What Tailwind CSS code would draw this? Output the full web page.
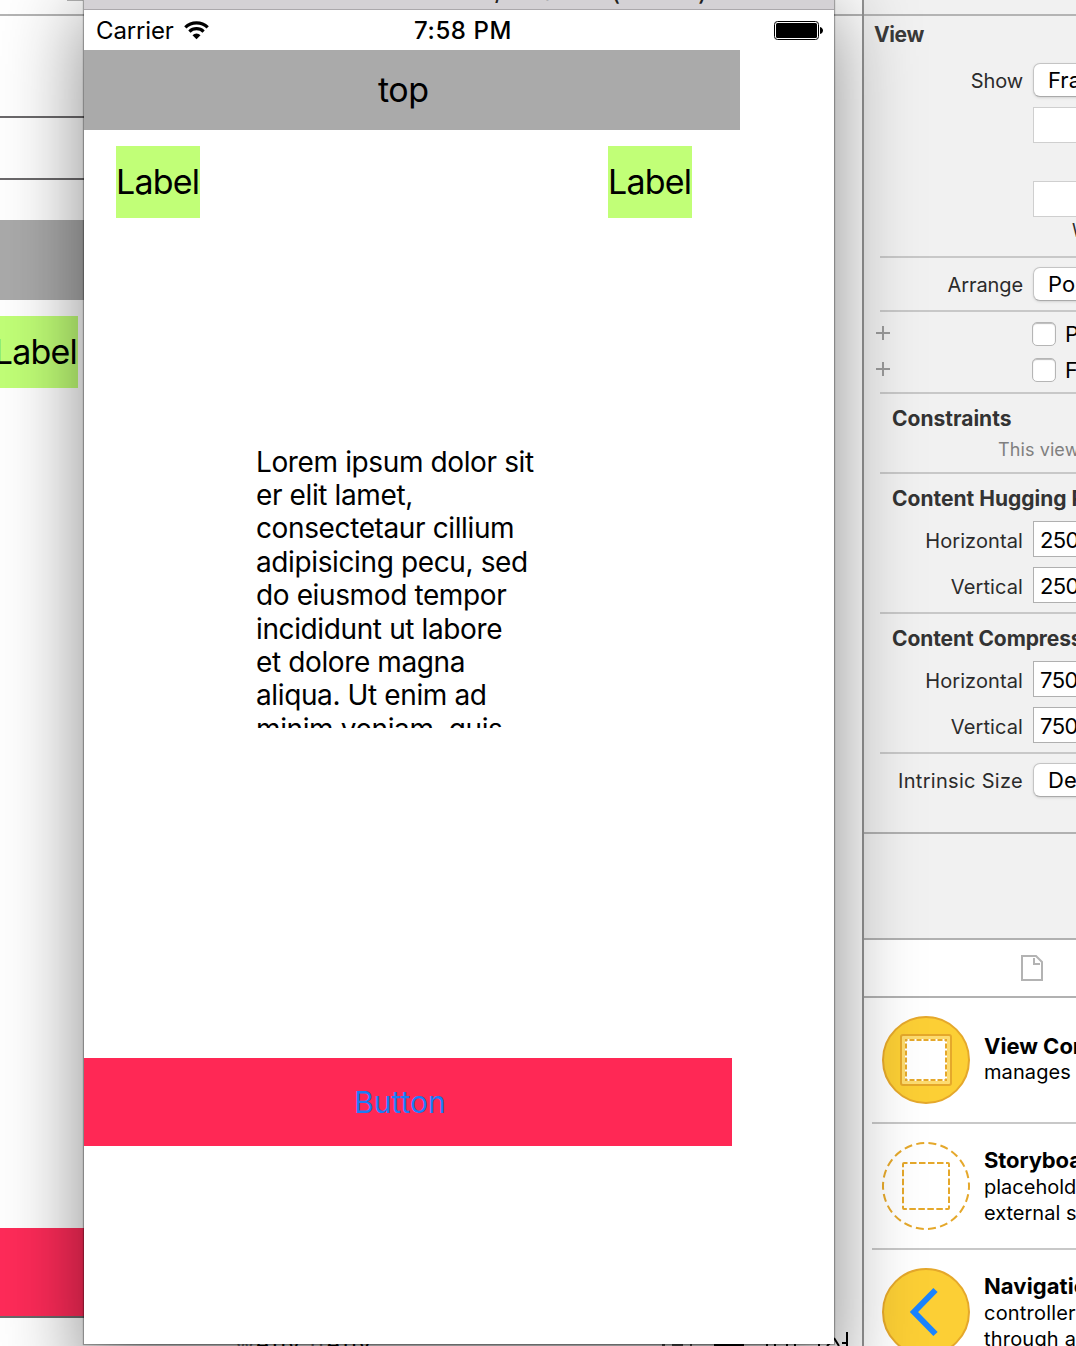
<!DOCTYPE html>
<html lang="en">
<head>
<meta charset="utf-8">
<title>Simulator and size inspector</title>
<script src="https://cdn.jsdelivr.net/npm/@tailwindcss/browser@4"></script>
</head>
<body class="bg-white">
<div class="relative flex h-[1346px] w-[1076px] overflow-hidden bg-white font-['Inter',sans-serif] text-black">

  <!-- Storyboard canvas -->
  <main class="flex h-full w-[862px] shrink-0 flex-col">
    <div class="flex h-4 shrink-0 border-b-2 border-[#b4b4b4] pl-[67px]"><div class="h-px w-4 bg-[#b4b4b4]"></div></div>
    <div class="w-[800px]">
      <div class="h-[102px] border-b-2 border-[#6b696b]"></div>
      <div class="h-[62px] border-b-2 border-[#6b696b]"></div>
      <div class="mt-10 h-20 bg-[#aaaaaa]"></div>
      <div class="mt-4 flex h-[72px] w-[78px] items-center justify-end overflow-hidden bg-[#c1ff77] pr-px pb-px text-[34px] tracking-[-0.8px]">Label</div>
      <div class="mt-[840px] h-[90px] border-b-2 border-[#6b696b] bg-[#ff2b59]"></div>
    </div>
    <div class="flex justify-between pr-3 pl-[235px]">
      <div class="mt-3 h-4 text-[24px] leading-[28px] tracking-[1.2px]"><span class="text-[#777]">w</span>Any <span class="text-[#777]">h</span>Any</div>
      <svg class="mt-3 h-4 w-[190px]" viewBox="660 1330 190 16" fill="none" stroke="#000" stroke-width="2">
        <path d="M662 1345h3M672 1345h11M690 1345h2" stroke="#555"/>
        <path d="M714 1345h30M767 1343v3M775 1343v3M787 1343v3M795 1343v3M819 1343v3M827 1346l3-3M834 1338l5 8M842 1343h5M847 1332v14"/>
      </svg>
    </div>
  </main>

  <!-- Inspector -->
  <aside class="flex h-full w-[214px] shrink-0 flex-col overflow-hidden border-l-2 border-[#949494] bg-[#f1f1f1] text-[20px] whitespace-nowrap text-[#2b2b2b]">
    <div class="h-4 shrink-0 border-b-2 border-[#b4b4b4]"></div>
    <h2 class="mt-[5px] pl-[10px] text-[21px] leading-7 font-bold tracking-[-0.4px] text-[#3a3a3a]">View</h2>
    <div class="mt-[14px] flex h-[34px] shrink-0 items-center">
      <span class="w-[159px] shrink-0 pt-0.5 text-right tracking-[-0.1px]">Show</span>
      <span class="ml-[10px] flex h-[34px] w-20 shrink-0 items-center rounded-[7px] border border-[#c4c4c4] border-b-[#aaa] bg-white pl-[14px] text-[22px] text-black shadow-sm">Frame</span>
    </div>
    <div class="mt-[10px] ml-[169px] h-9 w-20 shrink-0 border border-[#cfcfcf] bg-white"></div>
    <div class="mt-[38px] ml-[169px] h-9 w-20 shrink-0 border border-[#cfcfcf] bg-white"></div>
    <div class="ml-[208px] h-[27px] shrink-0 text-[18px] leading-[28px]">Width</div>
    <div class="mt-3 ml-4 h-0.5 shrink-0 bg-[#c8c8c8]"></div>
    <div class="mt-[9px] flex h-[34px] shrink-0 items-center">
      <span class="w-[159px] shrink-0 pt-0.5 text-right tracking-[-0.1px]">Arrange</span>
      <span class="ml-[10px] flex h-[34px] w-20 shrink-0 items-center rounded-[7px] border border-[#c4c4c4] border-b-[#aaa] bg-white pl-[14px] text-[22px] text-black shadow-sm">Position</span>
    </div>
    <div class="mt-[9px] ml-4 h-0.5 shrink-0 bg-[#c8c8c8]"></div>
    <div class="mt-1 flex h-9 shrink-0 items-center pl-3">
      <svg class="mb-0.5 h-[14px] w-[14px] shrink-0" viewBox="0 0 14 14" stroke="#9b9b9b" stroke-width="2"><path d="M7 0v14M0 7h14"/></svg>
      <span class="ml-[142px] size-6 shrink-0 rounded-[5px] border border-[#b5b5b5] bg-white shadow-[inset_0_1px_1px_#bbb]"></span>
      <span class="ml-[9px] text-[22px] text-black">Preserve</span>
    </div>
    <div class="flex h-9 shrink-0 items-center pl-3">
      <svg class="mb-0.5 h-[14px] w-[14px] shrink-0" viewBox="0 0 14 14" stroke="#9b9b9b" stroke-width="2"><path d="M7 0v14M0 7h14"/></svg>
      <span class="ml-[142px] size-6 shrink-0 rounded-[5px] border border-[#b5b5b5] bg-white shadow-[inset_0_1px_1px_#bbb]"></span>
      <span class="ml-[9px] text-[22px] text-black">Follow</span>
    </div>
    <div class="mt-1 ml-4 h-0.5 shrink-0 bg-[#c8c8c8]"></div>
    <h3 class="mt-[11px] pl-7 text-[21px] leading-7 font-bold text-[#333]">Constraints</h3>
    <p class="mt-[3px] pl-[134px] text-[18px] leading-7 tracking-[0.1px] text-[#808080]">This view</p>
    <div class="mt-[8px] ml-4 h-0.5 shrink-0 bg-[#c8c8c8]"></div>
    <h3 class="mt-[11px] pl-7 text-[21px] leading-7 font-bold text-[#333]">Content Hugging Priority</h3>
    <div class="mt-[8px] flex h-9 shrink-0 items-center">
      <span class="w-[159px] shrink-0 pt-1 text-right tracking-[0.1px]">Horizontal</span>
      <span class="ml-[10px] flex h-9 w-20 shrink-0 items-center border border-[#b0b0b0] bg-white pt-0.5 pl-[6px] text-[22px] tracking-[-0.6px] text-black">250</span>
    </div>
    <div class="mt-[10px] flex h-9 shrink-0 items-center">
      <span class="w-[159px] shrink-0 pt-1 text-right tracking-[0.1px]">Vertical</span>
      <span class="ml-[10px] flex h-9 w-20 shrink-0 items-center border border-[#b0b0b0] bg-white pt-0.5 pl-[6px] text-[22px] tracking-[-0.6px] text-black">250</span>
    </div>
    <div class="mt-[9px] ml-4 h-0.5 shrink-0 bg-[#c8c8c8]"></div>
    <h3 class="mt-[11px] pl-7 text-[21px] leading-7 font-bold tracking-[-0.1px] text-[#333]">Content Compression</h3>
    <div class="mt-[8px] flex h-9 shrink-0 items-center">
      <span class="w-[159px] shrink-0 pt-1 text-right tracking-[0.1px]">Horizontal</span>
      <span class="ml-[10px] flex h-9 w-20 shrink-0 items-center border border-[#b0b0b0] bg-white pt-0.5 pl-[6px] text-[22px] tracking-[-0.6px] text-black">750</span>
    </div>
    <div class="mt-[10px] flex h-9 shrink-0 items-center">
      <span class="w-[159px] shrink-0 pt-1 text-right tracking-[0.1px]">Vertical</span>
      <span class="ml-[10px] flex h-9 w-20 shrink-0 items-center border border-[#b0b0b0] bg-white pt-0.5 pl-[6px] text-[22px] tracking-[-0.6px] text-black">750</span>
    </div>
    <div class="mt-[9px] ml-4 h-0.5 shrink-0 bg-[#c8c8c8]"></div>
    <div class="mt-[9px] flex h-[34px] shrink-0 items-center">
      <span class="w-[159px] shrink-0 pt-0.5 text-right tracking-[0.3px]">Intrinsic Size</span>
      <span class="ml-[10px] flex h-[34px] w-20 shrink-0 items-center rounded-[7px] border border-[#c4c4c4] border-b-[#aaa] bg-white pl-[14px] text-[22px] text-black shadow-sm">Default</span>
    </div>
    <div class="mt-[35px] h-0.5 shrink-0 bg-[#b1b1b1]"></div>
    <div class="mt-[104px] flex h-[60px] shrink-0 items-center border-y-2 border-[#b1b1b1] bg-white pl-[157px]">
      <svg class="h-[26px] w-[22px]" viewBox="0 0 22 26" fill="none" stroke="#b3b3b3" stroke-width="2"><path d="M1 1h14l6 6v18H1zM13 3v6h6"/></svg>
    </div>
    <ul class="grow bg-white text-black">
      <li class="flex h-[126px]">
        <svg class="mt-[18px] ml-[18px] size-[88px] shrink-0" viewBox="0 0 88 88" fill="none" stroke="#e5a82b" stroke-width="2">
          <circle cx="44" cy="44" r="43" fill="#fccf35"/>
          <rect x="19" y="19" width="50" height="50" rx="2" fill="#fddc70"/>
          <rect x="23" y="23" width="42" height="42" fill="#fff" stroke="none"/>
          <path d="M23 24h42M23 64h42M24 23v42M64 23v42" stroke="#fff"/>
          <path d="M23 24h42M23 64h42M24 23v42M64 23v42" stroke-dasharray="5 2" stroke-dashoffset="2.5"/>
        </svg>
        <div class="mt-[35px] ml-[14px] text-[20px] leading-[27px] tracking-[0.1px]"><b class="block text-[22px] leading-[26px] tracking-[0px]">View Controller</b>manages a view</div>
      </li>
      <li class="relative flex h-[126px] before:absolute before:top-[-2px] before:right-0 before:left-2 before:h-0.5 before:bg-[#c8c8c8]">
        <svg class="mt-[18px] ml-[18px] size-[88px] shrink-0" viewBox="0 0 88 88" fill="none" stroke="#e5a82b" stroke-width="2">
          <circle cx="44" cy="44" r="43" stroke-dasharray="8 4.28" stroke-dashoffset="4"/>
          <rect x="21" y="21" width="46" height="46" rx="1" stroke-dasharray="6.5 2.5" stroke-dashoffset="3"/>
        </svg>
        <div class="mt-[23px] ml-[14px] text-[20px] leading-[26px]"><b class="mb-px block text-[22px] tracking-[-0.1px]">Storyboard Reference</b>placeholder for an<br>external storyboard</div>
      </li>
      <li class="relative flex h-[126px] before:absolute before:top-[-2px] before:right-0 before:left-2 before:h-0.5 before:bg-[#c8c8c8]">
        <svg class="mt-[18px] ml-[18px] size-[88px] shrink-0" viewBox="0 0 88 88" fill="none">
          <circle cx="44" cy="44" r="43" fill="#fccf35" stroke="#e5a82b" stroke-width="2"/>
          <path d="M53.5 22L32 44l21.500 22" stroke="#1a84ff" stroke-width="6"/>
        </svg>
        <div class="mt-[23px] ml-[14px] text-[20px] leading-[26px] tracking-[0.2px]"><b class="mb-px block text-[22px] tracking-[0.1px]">Navigation Controller</b>controller navigation<br>through a hierarchy</div>
      </li>
    </ul>
  </aside>

  <!-- Simulator window -->
  <section class="absolute top-[-34px] left-[84px] flex h-[1378px] w-[750px] flex-col bg-white whitespace-nowrap shadow-[0_0_1px_1px_rgba(0,0,0,0.3),0_44px_78px_rgba(0,0,0,0.48)]">
    <header class="flex h-11 shrink-0 items-center justify-center border-b border-[#aba8ac] bg-[#d4d1d5] pt-[5px] text-[26px] tracking-[0.3px] text-[#222]">iPhone 6s – iPhone 6s / iOS 9.2 (13C75)</header>
    <div class="flex h-10 shrink-0 items-center pr-[11px] pl-3 text-[24px]">
      <span class="w-[78px] pt-0.5 tracking-[-0.15px]">Carrier</span>
      <svg class="ml-[10px] h-[19px] w-[25px]" viewBox="0 0 25 19" fill="none" stroke="#000" stroke-width="3.200"><path d="M1.300 6.400a16 16 0 0 1 22.400 0M5.400 10.600a10.200 10.200 0 0 1 14.200 0"/><path d="M12.500 18.200L8.500 14.200a5.800 5.800 0 0 1 8 0z" fill="#000" stroke="none"/></svg>
      <span class="ml-[205px] w-[105px] pt-0.5 font-medium tracking-[0.6px]">7:58 PM</span>
      <svg class="ml-auto h-[19px] w-[49px]" viewBox="0 0 49 19"><rect x=".5" y=".5" width="44" height="18" rx="3" fill="none" stroke="#000"/><rect x="2" y="2" width="41" height="15" rx="1.500"/><path d="M46 6c4 1 4 6 0 7z"/></svg>
    </div>
    <div class="h-20 w-[656px] shrink-0 bg-[#aaaaaa] pl-[294px] text-[34px] leading-[80px] tracking-[-0.5px]">top</div>
    <div class="mt-4 ml-8 flex w-[576px] shrink-0 justify-between text-[34px] leading-[72px] tracking-[-0.8px]">
      <span class="h-[72px] w-[84px] bg-[#c1ff77]">Label</span>
      <span class="h-[72px] w-[84px] bg-[#c1ff77]">Label</span>
    </div>
    <p class="mt-[227px] ml-[172px] h-[283px] shrink-0 overflow-hidden pt-[0.6px] text-[28px] leading-[33.4px] tracking-[-0.38px]">Lorem ipsum dolor sit<br>er elit lamet,<br>consectetaur cillium<br>adipisicing pecu, sed<br>do eiusmod tempor<br>incididunt ut labore<br>et dolore magna<br>aliqua. Ut enim ad<br>minim veniam, quis</p>
    <div class="mt-[330px] h-[88px] w-[648px] shrink-0 bg-[#ff2855] pl-[270px] text-[30px] leading-[89px] text-[#1c7cf5]">Button</div>
  </section>
</div>
</body>
</html>
